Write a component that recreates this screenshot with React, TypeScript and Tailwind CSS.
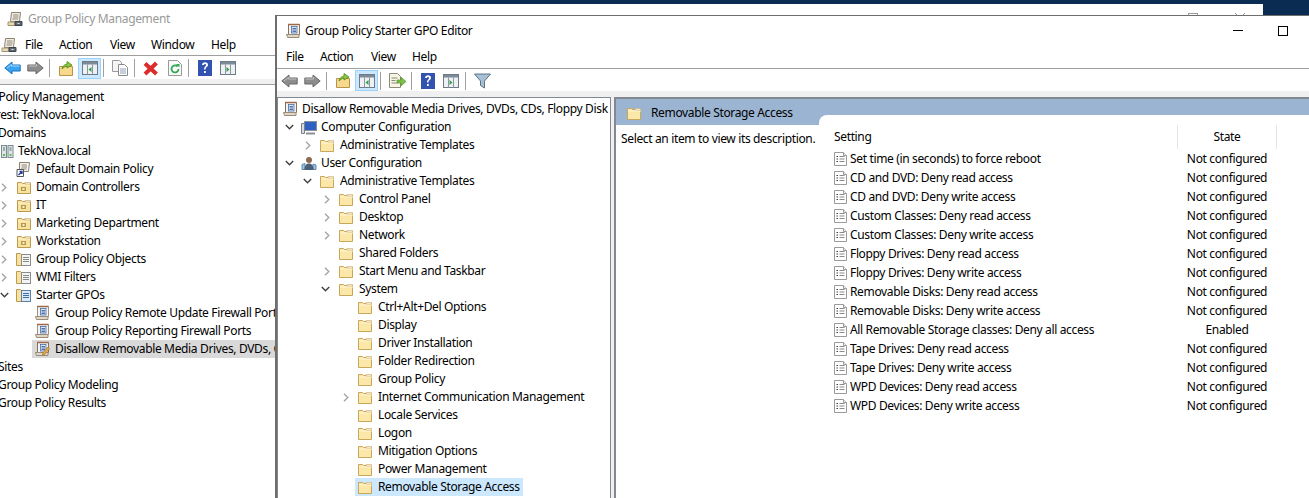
function Folder({ className = "" }: { className?: string }) {
  return (
    <svg width="16" height="15" viewBox="0 0 16 15" className={`shrink-0 ${className}`}>
      <path d="M1.500 2.500h4l1 1h8v10h-13z" fill="#fbe7a8" stroke="#c8a65a" />
      <path d="M2 5h13" stroke="#fff6d6" />
      <path d="M9 2.500h5.500v1.500H9z" fill="#fff" stroke="#c8a65a" strokeWidth=".6" />
    </svg>
  );
}

function OuFolder() {
  return (
    <svg width="16" height="15" viewBox="0 0 16 15" className="shrink-0">
      <path d="M1.500 2.500h4l1 1h8v10h-13z" fill="#f8e2a0" stroke="#bd9a4e" />
      <path d="M2 5h12" stroke="#fff3cc" />
      <path d="M9 2.500h5.500v1.500H9z" fill="#fff" stroke="#bd9a4e" strokeWidth=".6" />
      <rect x="5" y="7" width="5" height="4" fill="#b59a52" />
      <rect x="6.500" y="8" width="2" height="2" fill="#fff2c0" />
    </svg>
  );
}

function FolderDoc({ blue = false }: { blue?: boolean }) {
  return (
    <svg width="17" height="16" viewBox="0 0 17 16" className="shrink-0">
      <path d="M1.500 2.500h4l1 1h7v11h-12z" fill="#f8e2a0" stroke="#bd9a4e" />
      <rect x="6.500" y="3.500" width="9" height="11" fill={blue ? "#dbe9f6" : "#f4f4f4"} stroke={blue ? "#5a7fa8" : "#8c8c8c"} />
      <path d="M8 6.500h6M8 8.500h6M8 10.500h6" stroke={blue ? "#3d6ea8" : "#8a8a8a"} />
    </svg>
  );
}

function Scroll({ className = "", edit = false, muted = false }: { className?: string; edit?: boolean; muted?: boolean }) {
  return (
    <svg width="16" height="16" viewBox="0 0 16 16" className={`shrink-0 ${className}`}>
      <path d="M3.500 1.500h11v10h-11z" fill="#f1f3f6" stroke={muted ? "#a09080" : "#8d6f55"} />
      <path d="M3 1.500h11.500" stroke="#a0694a" strokeWidth="1.500" />
      <rect x="6.500" y="3.500" width="5.500" height="6.500" fill="#dbe6f4" stroke="#4a6fa5" strokeWidth=".8" />
      <path d="M7.500 5.500h3.500M7.500 7h3.500M7.500 8.500h3.500" stroke="#2f5597" strokeWidth=".8" />
      <path d="M1.500 11.500h12.500v3H2.500z" fill="#ded6c8" stroke="#9a8c78" />
      {edit && <path d="M9 12l5-6 1.500 1.500-5 6-2 .5z" fill="#f0b040" stroke="#a86a20" strokeWidth=".7" />}
    </svg>
  );
}

function MenuIcon() {
  return (
    <svg width="16" height="16" viewBox="0 0 16 16" className="shrink-0">
      <path d="M4.500 1.500h9l-1 9h-9z" fill="#f0ece2" stroke="#8d8272" />
      <path d="M6 4h5.500M6 6h5.500M5.500 8h5.500" stroke="#8f8878" />
      <path d="M1 11h7v3.500H1z" fill="#e6d9ba" stroke="#a59468" />
      <path d="M8 10.500h7v4H8z" fill="#5f6771" stroke="#3d434b" />
      <rect x="10.500" y="12" width="2" height="1" fill="#dfe3e8" />
    </svg>
  );
}

function Back({ active = false }: { active?: boolean }) {
  return (
    <svg width="17" height="14" viewBox="0 0 17 14" className="shrink-0">
      <path d="M.8 7L8 1v3h8.200v6H8v3z" fill={active ? "#38a4ef" : "#8d8d8d"} stroke={active ? "#1d6fc0" : "#6b6b6b"} strokeLinejoin="round" />
      <path d="M3 7l4.500-3.500V5H15.500" fill="none" stroke={active ? "#a6dcff" : "#c4c4c4"} />
    </svg>
  );
}

function Forward({ className = "" }: { className?: string }) {
  return (
    <svg width="17" height="14" viewBox="0 0 17 14" className={`shrink-0 ${className}`}>
      <path d="M16.200 7L9 1v3H.8v6H9v3z" fill="#8d8d8d" stroke="#6b6b6b" strokeLinejoin="round" />
      <path d="M1.500 5H9.500V3" fill="none" stroke="#c4c4c4" />
    </svg>
  );
}

function UpFolder({ className = "" }: { className?: string }) {
  return (
    <svg width="16" height="17" viewBox="0 0 16 17" className={`shrink-0 ${className}`}>
      <path d="M1.500 6.500h13v9h-13z" fill="#f6d98c" stroke="#b8934a" />
      <path d="M4 9c.5-3 2.500-4.500 5-5V1.500L14 5l-5 3V6c-2 .5-3.500 1.500-5 3z" fill="#8cc63f" stroke="#4f8a1f" strokeWidth=".8" />
    </svg>
  );
}

function PaneIcon({ right = false, className = "" }: { right?: boolean; className?: string }) {
  return (
    <svg width="16" height="14" viewBox="0 0 16 14" className={`shrink-0 ${className}`}>
      <rect x=".5" y=".5" width="15" height="13" fill="#eef1f4" stroke="#6e7a86" />
      <rect x="1" y="1" width="14" height="2.500" fill="#7d8b99" />
      <path d="M5.500 3.500v10M10.500 3.500v10" stroke="#8a96a2" />
      {right ? (
        <path d="M6.500 6l3 2.500-3 2.500z" fill="#2f9e44" />
      ) : (
        <path d="M9.500 6l-3 2.500 3 2.500z" fill="#2f9e44" />
      )}
    </svg>
  );
}

function Help({ className = "" }: { className?: string }) {
  return (
    <svg width="14" height="16" viewBox="0 0 14 16" className={`shrink-0 ${className}`}>
      <rect width="14" height="16" fill="#3253b0" />
      <path d="M4 5c0-4 6.500-3.500 6 0-.3 2-2.500 2-2.500 4.500H6C6 6.500 8 6.500 8 5 8 3.500 6 3.800 6 5z" fill="#fff" />
      <rect x="6" y="11" width="1.800" height="2" fill="#fff" />
    </svg>
  );
}

function Sep({ className = "" }: { className?: string }) {
  return <div className={`h-[18px] w-px shrink-0 bg-[#a0a0a0] ${className}`} />;
}

function Chevron({ open = false }: { open?: boolean }) {
  if (open) {
    return (
      <svg width="9" height="6" viewBox="0 0 9 6" className="shrink-0">
        <path d="M.8 1L4.500 4.800 8.200 1" fill="none" stroke="#404040" strokeWidth="1.400" />
      </svg>
    );
  }
  return (
    <svg width="6" height="9" viewBox="0 0 6 9" className="shrink-0">
      <path d="M1 .8L4.800 4.500 1 8.200" fill="none" stroke="#a6a6a6" strokeWidth="1.400" />
    </svg>
  );
}

function PolicyPage() {
  return (
    <svg width="15" height="16" viewBox="0 0 15 16" className="shrink-0">
      <path d="M1.500 1.500h9l3 3v10h-12z" fill="#fff" stroke="#9a9a9a" />
      <path d="M10.500 1.500v3h3" fill="#f0f0f0" stroke="#9a9a9a" />
      <path d="M3.500 5.500h1.500M3.500 8h1.500M3.500 10.500h1.500" stroke="#3c3c3c" strokeWidth="1.200" />
      <path d="M6.500 5.500h5M6.500 8h5M6.500 10.500h5" stroke="#8a8a8a" />
    </svg>
  );
}

function ChevSlot({ className, children }: { className: string; children?: React.ReactNode }) {
  return <span className={`flex shrink-0 items-center justify-center ${className}`}>{children}</span>;
}

const settings = [
  ["Set time (in seconds) to force reboot", "Not configured"],
  ["CD and DVD: Deny read access", "Not configured"],
  ["CD and DVD: Deny write access", "Not configured"],
  ["Custom Classes: Deny read access", "Not configured"],
  ["Custom Classes: Deny write access", "Not configured"],
  ["Floppy Drives: Deny read access", "Not configured"],
  ["Floppy Drives: Deny write access", "Not configured"],
  ["Removable Disks: Deny read access", "Not configured"],
  ["Removable Disks: Deny write access", "Not configured"],
  ["All Removable Storage classes: Deny all access", "Enabled"],
  ["Tape Drives: Deny read access", "Not configured"],
  ["Tape Drives: Deny write access", "Not configured"],
  ["WPD Devices: Deny read access", "Not configured"],
  ["WPD Devices: Deny write access", "Not configured"],
];

const ous = ["Domain Controllers", "IT", "Marketing Department", "Workstation"];

const systemItems = [
  "Ctrl+Alt+Del Options",
  "Display",
  "Driver Installation",
  "Folder Redirection",
  "Group Policy",
  "Internet Communication Management",
  "Locale Services",
  "Logon",
  "Mitigation Options",
  "Power Management",
];

const adminItems: [string, boolean][] = [
  ["Control Panel", true],
  ["Desktop", true],
  ["Network", true],
  ["Shared Folders", false],
  ["Start Menu and Taskbar", true],
];

function LeftTree() {
  const row = "flex h-[18px] items-center whitespace-nowrap";
  return (
    <div className="flex flex-col pt-[3px]">
      <div className={`${row} ml-[-38px]`}>Group Policy Management</div>
      <div className={`${row} ml-[-17px]`}>Forest: TekNova.local</div>
      <div className={`${row} ml-[-2px]`}>Domains</div>
      <div className={`${row} gap-[4px]`}>
        <svg width="13" height="15" viewBox="0 0 13 15" className="ml-[1px] shrink-0">
          <rect x=".5" y="1.500" width="5" height="12" fill="#dfe6ea" stroke="#7a8a90" />
          <rect x="7" y="1.500" width="5" height="12" fill="#dfe6ea" stroke="#7a8a90" />
          <path d="M2 4h2M2 6h2M8.500 4h2M8.500 6h2" stroke="#5a6a70" />
          <rect x="2" y="10" width="2" height="2" fill="#5cc04a" />
          <rect x="8.500" y="10" width="2" height="2" fill="#5cc04a" />
        </svg>
        <span>TekNova.local</span>
      </div>
      <div className={`${row} gap-[4px] pl-[16px]`}>
        <svg width="16" height="16" viewBox="0 0 16 16" className="shrink-0">
          <path d="M3.500 1.500h10l-1 9h-9z" fill="#f3f1ea" stroke="#8d8272" />
          <path d="M5.500 4h5.500M5.500 6h5.500M5 8h5.500" stroke="#8f8878" />
          <path d="M1 8.500h6.500v7H1z" fill="#fff" stroke="#555" />
          <path d="M2.500 14l3.500-3.500M3.500 10.500H6V13" fill="none" stroke="#2340a8" strokeWidth="1.300" />
        </svg>
        <span>Default Domain Policy</span>
      </div>
      {ous.map((name) => (
        <div key={name} className={row}>
          <ChevSlot className="ml-[1px] w-[6px]">
            <Chevron />
          </ChevSlot>
          <span className="w-[9px] shrink-0" />
          <OuFolder />
          <span className="ml-[4px]">{name}</span>
        </div>
      ))}
      <div className={row}>
        <ChevSlot className="ml-[1px] w-[6px]">
          <Chevron />
        </ChevSlot>
        <span className="w-[8px] shrink-0" />
        <FolderDoc />
        <span className="ml-[4px]">Group Policy Objects</span>
      </div>
      <div className={row}>
        <ChevSlot className="ml-[1px] w-[6px]">
          <Chevron />
        </ChevSlot>
        <span className="w-[8px] shrink-0" />
        <FolderDoc />
        <span className="ml-[4px]">WMI Filters</span>
      </div>
      <div className={row}>
        <ChevSlot className="ml-[1px] w-[6px]">
          <Chevron open />
        </ChevSlot>
        <span className="w-[8px] shrink-0" />
        <FolderDoc blue />
        <span className="ml-[4px]">Starter GPOs</span>
      </div>
      <div className={`${row} gap-[5px] pl-[34px]`}>
        <Scroll muted />
        <span>Group Policy Remote Update Firewall Ports</span>
      </div>
      <div className={`${row} gap-[5px] pl-[34px]`}>
        <Scroll muted />
        <span>Group Policy Reporting Firewall Ports</span>
      </div>
      <div className={`${row} ml-[32px] gap-[5px] bg-[#d9d9d9] pl-[2px]`}>
        <Scroll edit />
        <span>Disallow Removable Media Drives, DVDs, CDs</span>
      </div>
      <div className={`${row} ml-[-2px]`}>Sites</div>
      <div className={`${row} ml-[-2px]`}>Group Policy Modeling</div>
      <div className={`${row} ml-[-2px]`}>Group Policy Results</div>
    </div>
  );
}

function EditorTree() {
  const row = "flex h-[18px] items-center whitespace-nowrap";
  return (
    <div className="flex flex-col overflow-hidden pt-[2px]">
      <div className={`${row} gap-[4px] pl-[4px]`}>
        <Scroll />
        <span>Disallow Removable Media Drives, DVDs, CDs, Floppy Disk</span>
      </div>
      <div className={`${row} pl-[6px]`}>
        <ChevSlot className="w-[11px]">
          <Chevron open />
        </ChevSlot>
        <svg width="16" height="15" viewBox="0 0 16 15" className="ml-[6px] shrink-0">
          <rect x="3.500" y="1.500" width="12" height="9" fill="#2f5fc0" stroke="#8a8f98" />
          <path d="M.5 3.500h3v10h-3z" fill="#d8dce0" stroke="#7a7f88" />
          <path d="M5 13.500h9" stroke="#8a8f98" strokeWidth="2" />
        </svg>
        <span className="ml-[4px]">Computer Configuration</span>
      </div>
      <div className={`${row} pl-[26px]`}>
        <ChevSlot className="w-[7px]">
          <Chevron />
        </ChevSlot>
        <Folder className="ml-[8px]" />
        <span className="ml-[5px]">Administrative Templates</span>
      </div>
      <div className={`${row} pl-[6px]`}>
        <ChevSlot className="w-[11px]">
          <Chevron open />
        </ChevSlot>
        <svg width="16" height="15" viewBox="0 0 16 15" className="ml-[6px] shrink-0">
          <path d="M1 8.500l3-1v6H1zM12 8l3 1v4.500h-3z" fill="#9cc4e8" stroke="#5f88ad" />
          <circle cx="8" cy="4" r="3" fill="#8a6a52" />
          <path d="M3.500 14c0-4 1.500-6.500 4.500-6.500s4.500 2.500 4.500 6.500z" fill="#4a5f78" />
        </svg>
        <span className="ml-[4px]">User Configuration</span>
      </div>
      <div className={`${row} pl-[24px]`}>
        <ChevSlot className="w-[11px]">
          <Chevron open />
        </ChevSlot>
        <Folder className="ml-[6px]" />
        <span className="ml-[5px]">Administrative Templates</span>
      </div>
      {adminItems.map(([name, hasChildren]) => (
        <div key={name} className={`${row} pl-[45px]`}>
          <ChevSlot className="w-[7px]">{hasChildren && <Chevron />}</ChevSlot>
          <Folder className="ml-[8px]" />
          <span className="ml-[5px]">{name}</span>
        </div>
      ))}
      <div className={`${row} pl-[42px]`}>
        <ChevSlot className="w-[11px]">
          <Chevron open />
        </ChevSlot>
        <Folder className="ml-[7px]" />
        <span className="ml-[5px]">System</span>
      </div>
      {systemItems.map((name) => (
        <div key={name} className={`${row} pl-[64px]`}>
          <ChevSlot className="w-[7px]">
            {name === "Internet Communication Management" && <Chevron />}
          </ChevSlot>
          <Folder className="ml-[8px]" />
          <span className="ml-[5px]">{name}</span>
        </div>
      ))}
      <div className={`${row} pl-[77px]`}>
        <div className="flex h-[18px] w-[168px] items-center bg-[#cce8ff] pl-[2px]">
          <Folder />
          <span className="ml-[5px]">Removable Storage Access</span>
        </div>
      </div>
    </div>
  );
}

export default function App() {
  return (
    <div className="relative h-[498px] w-[1309px] overflow-hidden bg-[#0a2c52] font-['Noto_Sans',sans-serif] text-[12px] leading-[16px] tracking-[-0.35px] text-black">
      {/* Group Policy Management window, behind */}
      <div className="absolute left-0 top-[4px] flex h-[494px] w-[1263px] flex-col bg-white">
        <div className="flex h-[28px] items-center pl-[7px] pt-[2px]">
          <MenuIcon />
          <span className="ml-[5px] text-[#999999]">Group Policy Management</span>
          <div className="ml-auto mr-[18px] flex items-start self-start pt-[7px]">
            <div className="h-[10px] w-[10px] border border-[#999999]" />
            <div className="ml-[37px] h-[10px] w-[10px] text-[#999999]">
              <svg width="10" height="10" viewBox="0 0 10 10">
                <path d="M0 0l10 10M10 0L0 10" stroke="currentColor" />
              </svg>
            </div>
          </div>
        </div>
        <div className="flex h-[24px] items-center border-b border-[#a0a0a0] pl-[1px] pt-[2px]">
          <MenuIcon />
          <span className="ml-[8px] w-[34px]">File</span>
          <span className="w-[51px]">Action</span>
          <span className="w-[41px]">View</span>
          <span className="w-[60px]">Window</span>
          <span>Help</span>
        </div>
        <div className="flex h-[23px] items-center pl-[4px] pt-[1px]">
          <Back active />
          <Forward className="ml-[6px]" />
          <Sep className="ml-[5px]" />
          <UpFolder className="ml-[8px]" />
          <div className="ml-[4px] flex h-[21px] w-[23px] shrink-0 items-center justify-center border border-[#99d1ff] bg-[#cce8ff]">
            <PaneIcon />
          </div>
          <Sep className="ml-[2px]" />
          <svg width="16" height="16" viewBox="0 0 16 16" className="ml-[8px] shrink-0">
            <path d="M.5.5h7l2 2v9h-9z" fill="#f5f5f5" stroke="#9a9a9a" />
            <path d="M6.500 4.500h6l3 3v8h-9z" fill="#fff" stroke="#8a8a8a" />
            <path d="M8 9h6M8 11h6M8 13h6" stroke="#8ca0b8" />
          </svg>
          <Sep className="ml-[6px]" />
          <svg width="16" height="15" viewBox="0 0 16 15" className="ml-[8px] shrink-0">
            <path d="M2 2.500L13.500 13M13.500 2L2 13" stroke="#dd2c2c" strokeWidth="4" />
          </svg>
          <svg width="14" height="16" viewBox="0 0 14 16" className="ml-[9px] shrink-0">
            <path d="M.5.5h9l4 4v11H.5z" fill="#fafafa" stroke="#9a9a9a" />
            <path d="M10.500 9a3.500 3.500 0 1 1-1-2.500" fill="none" stroke="#2fa84f" strokeWidth="1.800" />
            <path d="M8 4h3.500v3.500z" fill="#2fa84f" />
          </svg>
          <Sep className="ml-[6px]" />
          <Help className="ml-[9px]" />
          <PaneIcon right className="ml-[8px]" />
        </div>
        <div className="h-[6px] border-b border-[#a0a0a0] bg-[#f0f0f0]" />
        <div className="w-[275px] flex-1 overflow-hidden">
          <LeftTree />
        </div>
      </div>

      {/* Group Policy Starter GPO Editor window */}
      <div className="absolute left-[275px] top-[15px] flex h-[483px] w-[1034px] flex-col border-l-2 border-t border-[#6e6e6e] bg-white">
        <div className="flex h-[29px] items-center pl-[8px]">
          <Scroll />
          <span className="ml-[4px] flex-1">Group Policy Starter GPO Editor</span>
          <div className="flex items-center">
            <div className="h-px w-[10px] bg-black" />
            <div className="ml-[35px] mr-[21px] h-[10px] w-[10px] border border-black" />
          </div>
        </div>
        <div className="flex h-[24px] items-center border-b border-[#a0a0a0] pl-[9px]">
          <span className="w-[34px]">File</span>
          <span className="w-[51px]">Action</span>
          <span className="w-[41px]">View</span>
          <span>Help</span>
        </div>
        <div className="flex h-[22px] items-center pl-[4px] pt-[1px]">
          <Back />
          <Forward className="ml-[6px]" />
          <Sep className="ml-[5px]" />
          <UpFolder className="ml-[8px]" />
          <div className="ml-[4px] flex h-[21px] w-[23px] shrink-0 items-center justify-center border border-[#99d1ff] bg-[#cce8ff]">
            <PaneIcon />
          </div>
          <Sep className="ml-[2px]" />
          <svg width="17" height="15" viewBox="0 0 17 15" className="ml-[8px] shrink-0">
            <path d="M.5.5h8l3 3v11H.5z" fill="#f8f4e6" stroke="#8a8a7a" />
            <path d="M2.500 5h6M2.500 7.500h4M2.500 10h6" stroke="#8a8a7a" />
            <path d="M8 7h4V4l5 4.500-5 4.500v-3H8z" fill="#7cc04a" stroke="#4f8a1f" strokeWidth=".6" />
          </svg>
          <Sep className="ml-[5px]" />
          <Help className="ml-[9px]" />
          <PaneIcon right className="ml-[8px]" />
          <Sep className="ml-[6px]" />
          <svg width="17" height="16" viewBox="0 0 17 16" className="ml-[8px] shrink-0">
            <path d="M.5 1h16L10.500 8v7L6.500 12.500V8z" fill="#a8c0d4" stroke="#5c7486" />
          </svg>
        </div>
        <div className="h-[6px] bg-[#f0f0f0]" />
        <div className="flex min-h-0 flex-1 bg-[#f0f0f0]">
          <div className="w-[334px] overflow-hidden border-l border-r border-t border-[#828790] bg-white">
            <EditorTree />
          </div>
          <div className="ml-[3px] flex min-w-0 flex-1 flex-col border-l-2 border-t-2 border-[#828790] bg-white">
            {/* header band with its tab */}
            <div className="flex h-[26px] bg-[#9ab4d1]">
              <div className="flex w-[203px] items-center pl-[10px] pt-[2px]">
                <Folder />
                <span className="ml-[9px]">Removable Storage Access</span>
              </div>
              <div className="mt-[16px] flex-1 rounded-tl-[8px] bg-white" />
            </div>
            <div className="flex flex-1">
              <div className="w-[217px] pl-[5px] pt-[6px]">Select an item to view its description.</div>
              <div className="flex-1">
                <div className="flex h-[24px]">
                  <div className="w-[344px] pl-[1px] pt-[4px]">Setting</div>
                  <div className="w-[100px] border-x border-[#e5e5e5] pt-[4px] text-center">State</div>
                </div>
                <div className="flex flex-col">
                  {settings.map(([name, state]) => (
                    <div key={name} className="flex h-[19px] items-center">
                      <PolicyPage />
                      <span className="ml-[2px] w-[327px] whitespace-nowrap">{name}</span>
                      <span className="w-[100px] text-center">{state}</span>
                    </div>
                  ))}
                </div>
              </div>
            </div>
          </div>
        </div>
      </div>
    </div>
  );
}
